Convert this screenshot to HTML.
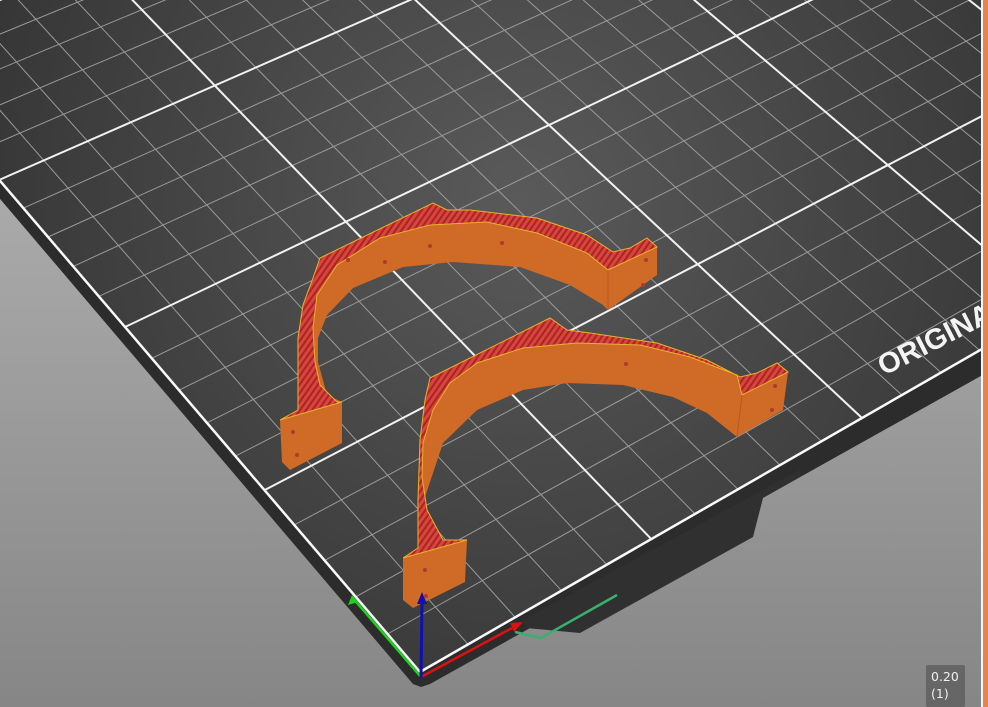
<!DOCTYPE html>
<html><head><meta charset="utf-8">
<style>
html,body{margin:0;padding:0;width:988px;height:707px;overflow:hidden;background:#999;font-family:"Liberation Sans",sans-serif}
#wrap{position:absolute;left:0;top:0;width:988px;height:707px;background:linear-gradient(180deg,#b6b6b6 0%,#a2a2a2 45%,#868686 100%)}
svg{position:absolute;left:0;top:0}
#lbl{position:absolute;left:926px;top:665px;width:39px;height:42px;background:#666;border-radius:2px;color:#f0f0f0;font-size:12.5px;line-height:17px;padding:3px 0 0 5px;box-sizing:border-box;font-family:"DejaVu Sans",sans-serif}
#vl{position:absolute;left:981px;top:0;width:2px;height:707px;background:#f4f4f4}
#ob{position:absolute;left:983px;top:0;width:5px;height:707px;background:#e8844a}
</style></head><body>
<div id="wrap">
<svg id="s" width="981" height="707" viewBox="0 0 981 707">
<defs>
<radialGradient id="pg" cx="520" cy="200" r="560" gradientUnits="userSpaceOnUse">
<stop offset="0" stop-color="#5a5a5a"/><stop offset="0.6" stop-color="#444"/><stop offset="1" stop-color="#363636"/>
</radialGradient>
<pattern id="hatch" width="5" height="5" patternUnits="userSpaceOnUse" patternTransform="rotate(35)">
<rect width="5" height="5" fill="#d8453a"/><rect width="2" height="5" fill="#a82428"/>
</pattern>
</defs>
<g id="bed"></g>
<g id="objs">
<polygon fill="#cf6a27" points="282,462 280,420 298,410 298,338 303,305 313,278 320,258 433,203 447,210 470,210 537,218 587,235 613,252 630,248 647,238 657,247 657,275 608,310 603,305 570,285 520,267 453,262 403,267 353,288 327,315 318,338 318,362 327,395 342,402 342,443 290,470"/>
<polygon fill="url(#hatch)" stroke="#e8b428" stroke-width="1" points="280,420 298,410 298,338 303,305 313,278 320,258 433,203 447,210 470,210 537,218 587,235 613,252 630,248 647,238 657,247 608,270 587,253 537,233 487,222 430,225 380,238 337,265 317,295 313,328 315,362 320,385 337,402 342,402"/>
<line x1="608" y1="270" x2="608" y2="310" stroke="#b85a20" stroke-width="1"/>
<polygon fill="#cf6a27" points="403,600 403,558 418,548 418,500 420,440 425,400 430,378 550,318 567,330 590,333 657,343 707,360 740,377 757,373 777,363 788,372 783,410 737,437 707,413 673,397 623,385 567,383 523,390 477,410 443,443 425,497 423,530 430,545 467,540 465,582 413,608"/>
<polygon fill="url(#hatch)" stroke="#e8b428" stroke-width="1" points="403,558 418,548 418,500 420,440 425,400 430,378 550,318 567,330 590,333 657,343 707,360 740,377 757,373 777,363 788,372 742,395 737,375 690,357 640,345 577,343 523,348 477,363 450,383 433,410 423,443 422,477 427,510 443,540 467,540"/>
<line x1="742" y1="395" x2="737" y2="437" stroke="#b85a20" stroke-width="1"/>
<g fill="#b03a30">
<circle cx="293" cy="432" r="2"/><circle cx="297" cy="455" r="2"/><circle cx="348" cy="260" r="2"/><circle cx="385" cy="262" r="2"/><circle cx="430" cy="246" r="2"/><circle cx="502" cy="243" r="2"/><circle cx="646" cy="260" r="2"/><circle cx="643" cy="285" r="2"/>
<circle cx="425" cy="570" r="2"/><circle cx="426" cy="596" r="2"/><circle cx="626" cy="364" r="2"/><circle cx="775" cy="386" r="2"/><circle cx="772" cy="410" r="2"/>
</g>
</g>
<line x1="421" y1="677" x2="352" y2="597" stroke="#1fd01f" stroke-width="2.5"/>
<polygon points="352,595 348,605 358,602" fill="#1fd01f"/>
<line x1="421" y1="677" x2="512" y2="628" stroke="#e01010" stroke-width="2.5"/>
<polygon points="523,622 510,623 514,632" fill="#e01010"/>
<line x1="421" y1="678" x2="422" y2="602" stroke="#1010b0" stroke-width="3"/>
<polygon points="422,592 417,604 427,604" fill="#1010b0"/>
<polyline points="515,632 541,638 617,595" fill="none" stroke="#3ab070" stroke-width="2.5"/>
</svg>
<div id="lbl">0.20<br>(1)</div>
<div id="vl"></div><div id="ob"></div>
</div>
<script>
(function(){
var src=[[0,0],[100,0],[0,100],[100,100]],dst=[[420,672],[862,418],[125,327],[549,125]];
var A=[],b=[];
for(var i=0;i<4;i++){var u=src[i][0],v=src[i][1],x=dst[i][0],y=dst[i][1];
A.push([u,v,1,0,0,0,-u*x,-v*x]);b.push(x);
A.push([0,0,0,u,v,1,-u*y,-v*y]);b.push(y);}
var n=8;for(var c=0;c<n;c++){var p=c;for(var r=c+1;r<n;r++)if(Math.abs(A[r][c])>Math.abs(A[p][c]))p=r;
var t=A[c];A[c]=A[p];A[p]=t;t=b[c];b[c]=b[p];b[p]=t;
for(var r=0;r<n;r++)if(r!==c){var f=A[r][c]/A[c][c];for(var k=c;k<n;k++)A[r][k]-=f*A[c][k];b[r]-=f*b[c];}}
var h=[];for(var i=0;i<n;i++)h.push(b[i]/A[i][i]);
function P(u,v){var w=h[6]*u+h[7]*v+1;return[(h[0]*u+h[1]*v+h[2])/w,(h[3]*u+h[4]*v+h[5])/w];}
var W=250,H=210,out='';
var c0=P(0,0),c1=P(W,0),c2=P(W,H),c3=P(0,H);
out+='<polygon fill="#2c2c2c" points="'+[P(0,H),[-5,193],[413,684],[421,687],[430,684],[988,372],P(W,0),c0].map(function(p){return p[0]+','+p[1]}).join(' ')+'"/>';
out+='<polygon fill="#303030" points="523,620 526,628 580,633 753,537 763,498 777,490 800,477 800,470"/>';
var pts=[];for(var i=0;i<=20;i++)pts.push(P(W*i/20,0));for(i=0;i<=20;i++)pts.push(P(W,H*i/20));for(i=20;i>=0;i--)pts.push(P(W*i/20,H));for(i=20;i>=0;i--)pts.push(P(0,H*i/20));
out+='<polygon fill="url(#pg)" points="'+pts.map(function(p){return p[0].toFixed(1)+','+p[1].toFixed(1)}).join(' ')+'"/>';
function L(a,b2,col,wd){out+='<line x1="'+a[0].toFixed(1)+'" y1="'+a[1].toFixed(1)+'" x2="'+b2[0].toFixed(1)+'" y2="'+b2[1].toFixed(1)+'" stroke="'+col+'" stroke-width="'+wd+'"/>';}
for(var u=10;u<W;u+=10){if(u%50)L(P(u,0),P(u,H),'#9a9a9a',1);}
for(var v=10;v<H;v+=10){if(v%50)L(P(0,v),P(W,v),'#9a9a9a',1);}
for(u=50;u<W;u+=50)L(P(u,0),P(u,H),'#f2f2f2',2);
for(v=50;v<H;v+=50)L(P(0,v),P(W,v),'#f2f2f2',2);
L(c0,c1,'#fafafa',2.5);L(c0,c3,'#fafafa',2.5);L(c1,c2,'#fafafa',2.5);L(c3,c2,'#fafafa',2.5);
out+='<text x="0" y="0" transform="translate(884,376) rotate(-27)" fill="#f4f4f4" font-family="Liberation Sans,sans-serif" font-weight="bold" font-size="29">ORIGINAL PRUSA</text>';
document.getElementById('bed').innerHTML=out;
})();
</script>
</body></html>
